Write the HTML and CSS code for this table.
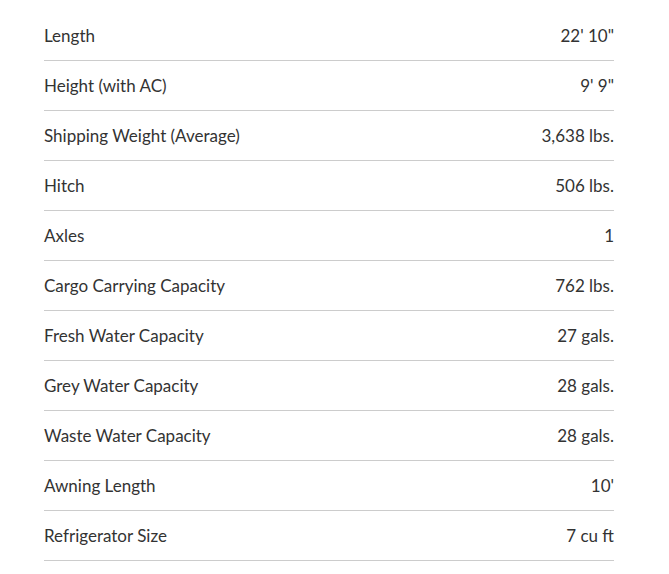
FILE: index.html
```html
<!DOCTYPE html>
<html>
<head>
<meta charset="utf-8">
<link rel="stylesheet" href="styles.css">
</head>
<body>
<div class="specs">
  <div class="row"><span class="label">Length</span><span class="value">22' 10"</span></div>
  <div class="row"><span class="label">Height (with AC)</span><span class="value">9' 9"</span></div>
  <div class="row"><span class="label">Shipping Weight (Average)</span><span class="value">3,638 lbs.</span></div>
  <div class="row"><span class="label">Hitch</span><span class="value">506 lbs.</span></div>
  <div class="row"><span class="label">Axles</span><span class="value">1</span></div>
  <div class="row"><span class="label">Cargo Carrying Capacity</span><span class="value">762 lbs.</span></div>
  <div class="row"><span class="label">Fresh Water Capacity</span><span class="value">27 gals.</span></div>
  <div class="row"><span class="label">Grey Water Capacity</span><span class="value">28 gals.</span></div>
  <div class="row"><span class="label">Waste Water Capacity</span><span class="value">28 gals.</span></div>
  <div class="row"><span class="label">Awning Length</span><span class="value">10'</span></div>
  <div class="row"><span class="label">Refrigerator Size</span><span class="value">7 cu ft</span></div>
</div>
</body>
</html>
```
FILE: styles.css
```css
html, body {
  margin: 0;
  padding: 0;
  background: #ffffff;
}
body {
  font-family: Lato, "Open Sans", sans-serif;
  font-size: 17px;
  color: #333333;
}
.specs {
  width: 570px;
  margin: 11px 0 0 44px;
}
.row {
  display: flex;
  justify-content: space-between;
  align-items: center;
  height: 49px;
  border-bottom: 1px solid #cccccc;
}
```
